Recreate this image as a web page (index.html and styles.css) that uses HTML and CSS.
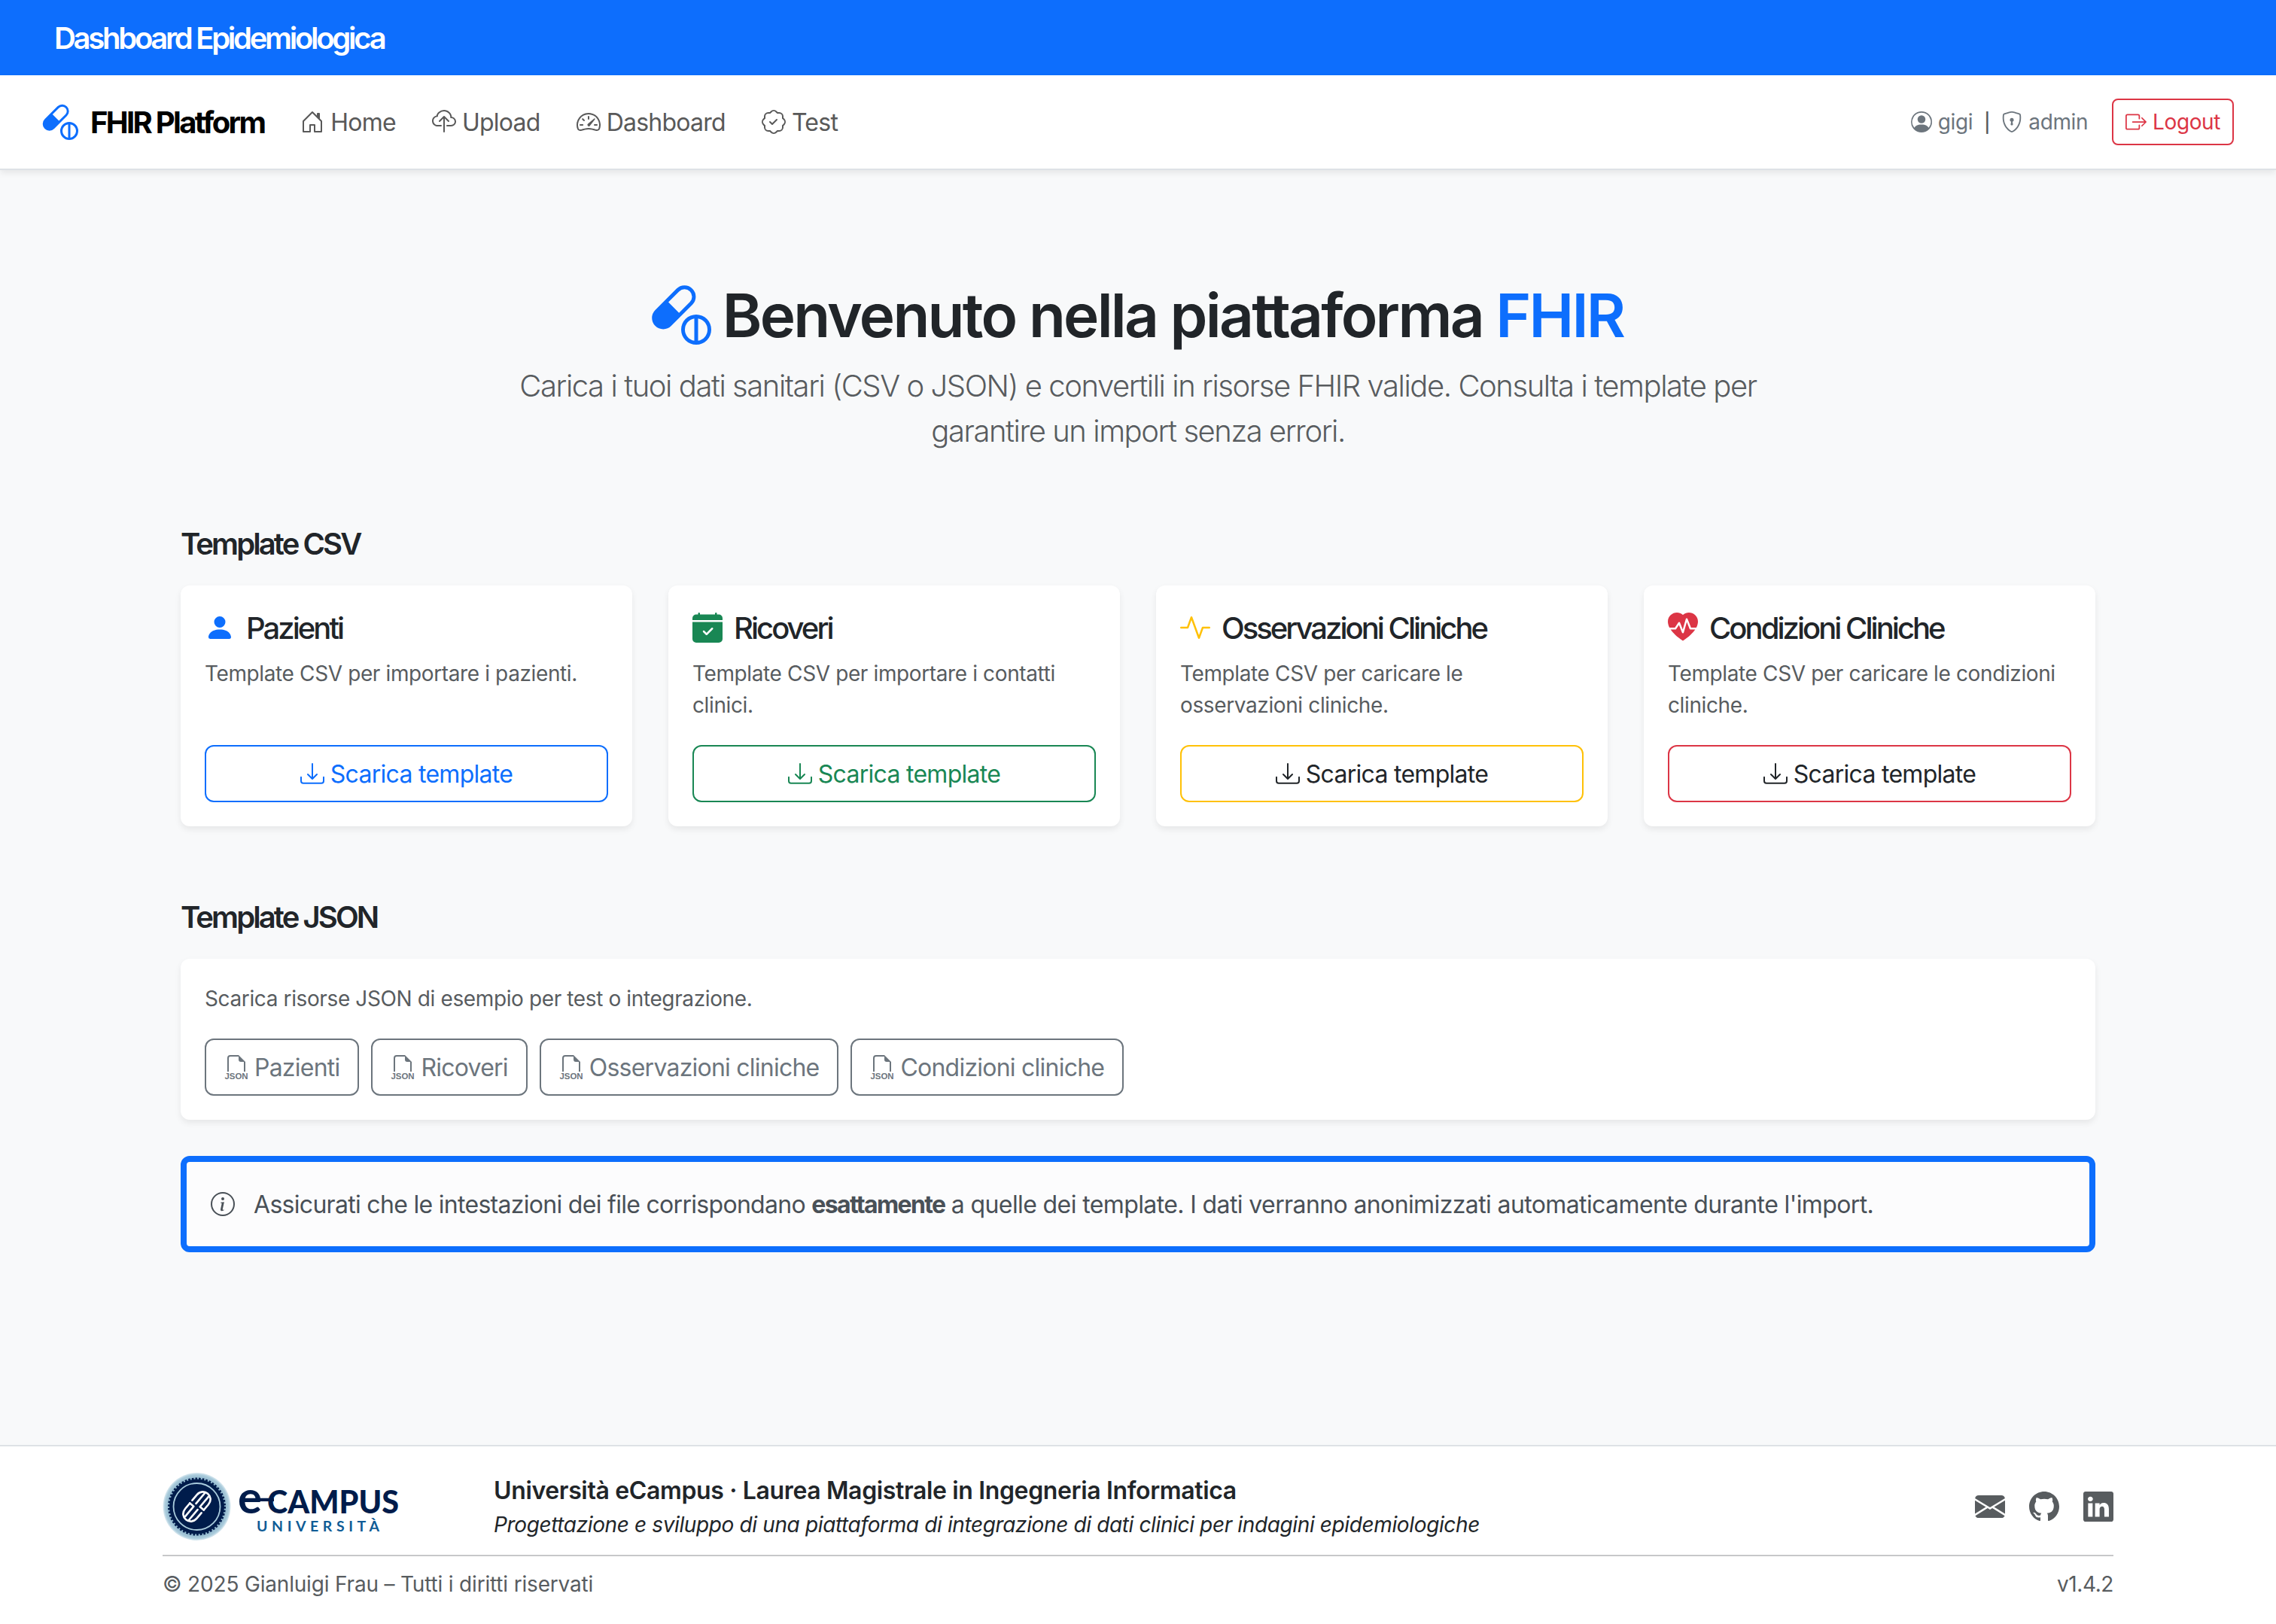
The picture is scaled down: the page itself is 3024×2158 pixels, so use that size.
FILE: index.html
```html
<!DOCTYPE html>
<html lang="it">
<head>
<meta charset="utf-8">
<title>FHIR Platform</title>
<link rel="stylesheet" href="styles.css">
</head>
<body>
<svg class="sprite" aria-hidden="true">
  <symbol id="capsule" viewBox="0 0 16 16"><path d="M11.02 5.364a3 3 0 0 0-4.242-4.243L1.121 6.778a3 3 0 1 0 4.243 4.243l5.657-5.657Zm-6.413-.657 2.878-2.879a2 2 0 1 1 2.829 2.829L7.435 7.536zM12 8a4 4 0 1 1 0 8 4 4 0 0 1 0-8m-.5 1.042a3 3 0 0 0 0 5.917zm1 5.917a3 3 0 0 0 0-5.917z"/></symbol>
  <symbol id="house" viewBox="0 0 16 16"><path d="M8.354 1.146a.5.5 0 0 0-.708 0l-6 6A.5.5 0 0 0 1.5 7.5v7a.5.5 0 0 0 .5.5h4.5a.5.5 0 0 0 .5-.5v-4h2v4a.5.5 0 0 0 .5.5H14a.5.5 0 0 0 .5-.5v-7a.5.5 0 0 0-.146-.354L13 5.793V2.5a.5.5 0 0 0-.5-.5h-1a.5.5 0 0 0-.5.5v1.293zM2.5 14V7.707l5.5-5.5 5.5 5.5V14H10v-4a.5.5 0 0 0-.5-.5h-3a.5.5 0 0 0-.5.5v4z"/></symbol>
  <symbol id="cloud" viewBox="0 0 16 16"><path d="M4.406 1.342A5.53 5.53 0 0 1 8 0c2.69 0 4.923 2 5.166 4.579C14.758 4.804 16 6.137 16 7.773 16 9.569 14.502 11 12.687 11H10a.5.5 0 0 1 0-1h2.688C13.979 10 15 8.988 15 7.773c0-1.216-1.02-2.228-2.313-2.228h-.5v-.5C12.188 2.825 10.328 1 8 1a4.53 4.53 0 0 0-2.941 1.1c-.757.652-1.153 1.438-1.153 2.055v.448l-.445.049C2.064 4.805 1 5.952 1 7.318 1 8.785 2.23 10 3.781 10H6a.5.5 0 0 1 0 1H3.781C1.708 11 0 9.366 0 7.318c0-1.763 1.266-3.223 2.942-3.593.143-.863.698-1.723 1.464-2.383"/><path d="M7.646 4.146a.5.5 0 0 1 .708 0l3 3a.5.5 0 0 1-.708.708L8.5 5.707V14.5a.5.5 0 0 1-1 0V5.707L5.354 7.854a.5.5 0 1 1-.708-.708z"/></symbol>
  <symbol id="speedometer" viewBox="0 0 16 16"><path d="M8 4a.5.5 0 0 1 .5.5V6a.5.5 0 0 1-1 0V4.5A.5.5 0 0 1 8 4M3.732 5.732a.5.5 0 0 1 .707 0l.915.914a.5.5 0 1 1-.708.708l-.914-.915a.5.5 0 0 1 0-.707M2 10a.5.5 0 0 1 .5-.5h1.586a.5.5 0 0 1 0 1H2.5A.5.5 0 0 1 2 10m9.5 0a.5.5 0 0 1 .5-.5h1.5a.5.5 0 0 1 0 1H12a.5.5 0 0 1-.5-.5m.754-4.246a.39.39 0 0 0-.527-.02L7.547 9.31a.91.91 0 1 0 1.302 1.258l3.434-4.297a.39.39 0 0 0-.029-.518z"/><path fill-rule="evenodd" d="M0 10a8 8 0 1 1 15.547 2.661c-.442 1.253-1.845 1.602-2.932 1.25C11.309 13.488 9.475 13 8 13c-1.474 0-3.31.488-4.615.911-1.087.352-2.49.003-2.932-1.25A8 8 0 0 1 0 10m8-7a7 7 0 0 0-6.603 9.329c.203.575.923.876 1.68.63C4.397 12.533 6.358 12 8 12s3.604.532 4.923.96c.757.245 1.477-.056 1.68-.631A7 7 0 0 0 8 3"/></symbol>
  <symbol id="patch" viewBox="0 0 16 16"><path fill-rule="evenodd" d="M10.354 6.146a.5.5 0 0 1 0 .708l-3 3a.5.5 0 0 1-.708 0l-1.5-1.5a.5.5 0 1 1 .708-.708L7 8.793l2.646-2.647a.5.5 0 0 1 .708 0"/><path d="m10.273 2.513-.921-.944.715-.698.622.637.89-.011a2.89 2.89 0 0 1 2.924 2.924l-.01.89.636.622a2.89 2.89 0 0 1 0 4.134l-.637.622.011.89a2.89 2.89 0 0 1-2.924 2.924l-.89-.01-.622.636a2.89 2.89 0 0 1-4.134 0l-.622-.637-.89.011a2.89 2.89 0 0 1-2.924-2.924l.01-.89-.636-.622a2.89 2.89 0 0 1 0-4.134l.637-.622-.011-.89a2.89 2.89 0 0 1 2.924-2.924l.89.01.622-.636a2.89 2.89 0 0 1 4.134 0l-.715.698a1.89 1.89 0 0 0-2.704 0l-.92.944-1.32-.016a1.89 1.89 0 0 0-1.911 1.912l.016 1.318-.944.921a1.89 1.89 0 0 0 0 2.704l.944.92-.016 1.32a1.89 1.89 0 0 0 1.912 1.911l1.318-.016.921.944a1.89 1.89 0 0 0 2.704 0l.92-.944 1.32.016a1.89 1.89 0 0 0 1.911-1.912l-.016-1.318.944-.921a1.89 1.89 0 0 0 0-2.704l-.944-.92.016-1.32a1.89 1.89 0 0 0-1.912-1.911z"/></symbol>
  <symbol id="person-circle" viewBox="0 0 16 16"><path d="M11 6a3 3 0 1 1-6 0 3 3 0 0 1 6 0"/><path fill-rule="evenodd" d="M0 8a8 8 0 1 1 16 0A8 8 0 0 1 0 8m8-7a7 7 0 0 0-5.468 11.37C3.242 11.226 4.805 10 8 10s4.757 1.225 5.468 2.37A7 7 0 0 0 8 1"/></symbol>
  <symbol id="shield" viewBox="0 0 16 16"><path d="M5.338 1.59a61 61 0 0 0-2.837.856.48.48 0 0 0-.328.39c-.554 4.157.726 7.19 2.253 9.188a10.7 10.7 0 0 0 2.287 2.233c.346.244.652.42.893.533q.18.085.293.118a1 1 0 0 0 .101.025 1 1 0 0 0 .1-.025q.114-.034.294-.118c.24-.113.547-.29.893-.533a10.7 10.7 0 0 0 2.287-2.233c1.527-1.997 2.807-5.031 2.253-9.188a.48.48 0 0 0-.328-.39c-.651-.213-1.75-.56-2.837-.855C9.552 1.29 8.531 1.067 8 1.067c-.53 0-1.552.223-2.662.524zM5.072.56C6.157.265 7.31 0 8 0s1.843.265 2.928.56c1.11.3 2.229.655 2.887.87a1.54 1.54 0 0 1 1.044 1.262c.596 4.477-.787 7.795-2.465 9.99a11.8 11.8 0 0 1-2.517 2.453 7 7 0 0 1-1.048.625c-.28.132-.581.24-.829.24s-.548-.108-.829-.24a7 7 0 0 1-1.048-.625 11.8 11.8 0 0 1-2.517-2.453C1.928 10.487.545 7.169 1.141 2.692A1.54 1.54 0 0 1 2.185 1.43 63 63 0 0 1 5.072.56"/><path d="M9.5 6.5a1.5 1.5 0 0 1-1 1.415l.385 1.99a.5.5 0 0 1-.491.595h-.788a.5.5 0 0 1-.49-.595l.384-1.99a1.5 1.5 0 1 1 2-1.415"/></symbol>
  <symbol id="exit" viewBox="0 0 16 16"><path fill-rule="evenodd" d="M10 12.5a.5.5 0 0 1-.5.5h-8a.5.5 0 0 1-.5-.5v-9a.5.5 0 0 1 .5-.5h8a.5.5 0 0 1 .5.5v2a.5.5 0 0 0 1 0v-2A1.5 1.5 0 0 0 9.5 2h-8A1.5 1.5 0 0 0 0 3.5v9A1.5 1.5 0 0 0 1.5 14h8a1.5 1.5 0 0 0 1.5-1.5v-2a.5.5 0 0 0-1 0z"/><path fill-rule="evenodd" d="M15.854 8.354a.5.5 0 0 0 0-.708l-3-3a.5.5 0 0 0-.708.708L14.293 7.5H5.5a.5.5 0 0 0 0 1h8.793l-2.147 2.146a.5.5 0 0 0 .708.708z"/></symbol>
  <symbol id="person" viewBox="0 0 16 16"><path d="M3 14s-1 0-1-1 1-4 6-4 6 3 6 4-1 1-1 1zm5-6a3 3 0 1 0 0-6 3 3 0 0 0 0 6"/></symbol>
  <symbol id="calendar" viewBox="0 0 16 16"><path d="M4 .5a.5.5 0 0 0-1 0V1H2a2 2 0 0 0-2 2v1h16V3a2 2 0 0 0-2-2h-1V.5a.5.5 0 0 0-1 0V1H4zM16 14V5H0v9a2 2 0 0 0 2 2h12a2 2 0 0 0 2-2m-5.146-5.146-3 3a.5.5 0 0 1-.708 0l-1.5-1.5a.5.5 0 0 1 .708-.708L7.5 10.793l2.646-2.647a.5.5 0 0 1 .708.708"/></symbol>
  <symbol id="activity" viewBox="0 0 16 16"><path fill-rule="evenodd" d="M6 2a.5.5 0 0 1 .47.33L10 12.036l1.53-4.208A.5.5 0 0 1 12 7.5h3.5a.5.5 0 0 1 0 1h-3.15l-1.88 5.17a.5.5 0 0 1-.94 0L6 3.964 4.47 8.171A.5.5 0 0 1 4 8.5H.5a.5.5 0 0 1 0-1h3.15l1.88-5.17A.5.5 0 0 1 6 2"/></symbol>
  <symbol id="heart" viewBox="0 0 16 16"><path d="M1.475 9C2.702 10.84 4.779 12.871 8 15c3.221-2.129 5.298-4.16 6.525-6H12a.5.5 0 0 1-.464-.314l-1.457-3.642-1.598 5.593a.5.5 0 0 1-.945.049L5.889 6.568l-1.473 2.21A.5.5 0 0 1 4 9z"/><path d="M.88 8C-2.427 1.68 4.41-2 7.823 1.143q.09.083.176.171a3 3 0 0 1 .176-.17C11.59-2 18.426 1.68 15.12 8h-2.783l-1.874-4.686a.5.5 0 0 0-.945.049L7.921 8.956 6.464 5.314a.5.5 0 0 0-.88-.091L3.732 8z"/></symbol>
  <symbol id="download" viewBox="0 0 16 16"><path d="M.5 9.9a.5.5 0 0 1 .5.5v2.5a1 1 0 0 0 1 1h12a1 1 0 0 0 1-1v-2.5a.5.5 0 0 1 1 0v2.5a2 2 0 0 1-2 2H2a2 2 0 0 1-2-2v-2.5a.5.5 0 0 1 .5-.5"/><path d="M7.646 11.854a.5.5 0 0 0 .708 0l3-3a.5.5 0 0 0-.708-.708L8.5 10.293V1.5a.5.5 0 0 0-1 0v8.793L5.354 8.146a.5.5 0 1 0-.708.708z"/></symbol>
  <symbol id="json" viewBox="0 0 16 16"><path d="M14 4.5V11h-1V4.5h-2A1.5 1.5 0 0 1 9.5 3V1H4a1 1 0 0 0-1 1v9H2V2a2 2 0 0 1 2-2h5.5z"/><text class="filetype" x="0.2" y="15.8" textLength="15.6" lengthAdjust="spacingAndGlyphs">JSON</text></symbol>
  <symbol id="info" viewBox="0 0 16 16"><path d="M8 15A7 7 0 1 1 8 1a7 7 0 0 1 0 14m0 1A8 8 0 1 0 8 0a8 8 0 0 0 0 16"/><path d="m8.93 6.588-2.29.287-.082.38.45.083c.294.07.352.176.288.469l-.738 3.468c-.194.897.105 1.319.808 1.319.545 0 1.178-.252 1.465-.598l.088-.416c-.2.176-.492.246-.686.246-.275 0-.375-.193-.304-.533zM9 4.5a1 1 0 1 1-2 0 1 1 0 0 1 2 0"/></symbol>
  <symbol id="envelope" viewBox="0 0 16 16"><path d="M.05 3.555A2 2 0 0 1 2 2h12a2 2 0 0 1 1.95 1.555L8 8.414zM0 4.697v7.104l5.803-3.558zM6.761 8.83l-6.57 4.027A2 2 0 0 0 2 14h12a2 2 0 0 0 1.808-1.144l-6.57-4.027L8 9.586zm3.436-.586L16 11.801V4.697z"/></symbol>
  <symbol id="github" viewBox="0 0 16 16"><path d="M8 0C3.58 0 0 3.58 0 8c0 3.54 2.29 6.53 5.47 7.59.4.07.55-.17.55-.38 0-.19-.01-.82-.01-1.49-2.01.37-2.53-.49-2.69-.94-.09-.23-.48-.94-.82-1.13-.28-.15-.68-.52-.01-.53.63-.01 1.08.58 1.23.82.72 1.21 1.87.87 2.33.66.07-.52.28-.87.51-1.07-1.78-.2-3.64-.89-3.64-3.95 0-.87.31-1.59.82-2.15-.08-.2-.36-1.02.08-2.12 0 0 .67-.21 2.2.82.64-.18 1.32-.27 2-.27s1.36.09 2 .27c1.53-1.04 2.2-.82 2.2-.82.44 1.1.16 1.92.08 2.12.51.56.82 1.27.82 2.15 0 3.07-1.87 3.75-3.65 3.95.29.25.54.73.54 1.48 0 1.07-.01 1.93-.01 2.2 0 .21.15.46.55.38A8.01 8.01 0 0 0 16 8c0-4.42-3.58-8-8-8"/></symbol>
  <symbol id="linkedin" viewBox="0 0 16 16"><path d="M0 1.146C0 .513.526 0 1.175 0h13.65C15.474 0 16 .513 16 1.146v13.708c0 .633-.526 1.146-1.175 1.146H1.175C.526 16 0 15.487 0 14.854zm4.943 12.248V6.169H2.542v7.225zm-1.2-8.212c.837 0 1.358-.554 1.358-1.248-.015-.709-.52-1.248-1.342-1.248S2.4 3.226 2.4 3.934c0 .694.521 1.248 1.327 1.248zm4.908 8.212V9.359c0-.216.016-.432.08-.586.173-.431.568-.878 1.232-.878.869 0 1.216.662 1.216 1.634v3.865h2.401V9.25c0-2.22-1.184-3.252-2.764-3.252-1.274 0-1.845.7-2.165 1.193v.025h-.016l.016-.025V6.169h-2.4c.03.678 0 7.225 0 7.225z"/></symbol>
</svg>

<div class="topbar"><span class="topbar-title">Dashboard Epidemiologica</span></div>

<nav class="navbar">
  <a class="brand"><svg class="icon brand-icon"><use href="#capsule"/></svg><span>FHIR Platform</span></a>
  <a class="nav-link"><svg class="icon"><use href="#house"/></svg><span>Home</span></a>
  <a class="nav-link"><svg class="icon"><use href="#cloud"/></svg><span>Upload</span></a>
  <a class="nav-link"><svg class="icon"><use href="#speedometer"/></svg><span>Dashboard</span></a>
  <a class="nav-link"><svg class="icon"><use href="#patch"/></svg><span>Test</span></a>
  <div class="account">
    <span class="account-item"><svg class="icon"><use href="#person-circle"/></svg><span>gigi</span></span>
    <span class="divider">|</span>
    <span class="account-item"><svg class="icon"><use href="#shield"/></svg><span>admin</span></span>
    <a class="logout"><svg class="icon"><use href="#exit"/></svg><span>Logout</span></a>
  </div>
</nav>

<main class="main">
  <header class="hero">
    <h1 class="hero-title"><svg class="icon hero-icon"><use href="#capsule"/></svg><span>Benvenuto nella piattaforma <span class="accent">FHIR</span></span></h1>
    <p class="lead">Carica i tuoi dati sanitari (CSV o JSON) e convertili in risorse FHIR valide. Consulta i template per<br>garantire un import senza errori.</p>
  </header>

  <section class="section">
    <h2 class="section-title">Template CSV</h2>
    <div class="cards">
      <article class="card">
        <h3 class="card-title"><svg class="icon blue"><use href="#person"/></svg><span>Pazienti</span></h3>
        <p class="card-text">Template CSV per importare i pazienti.</p>
        <a class="btn btn-blue"><svg class="icon"><use href="#download"/></svg><span>Scarica template</span></a>
      </article>
      <article class="card">
        <h3 class="card-title"><svg class="icon green"><use href="#calendar"/></svg><span>Ricoveri</span></h3>
        <p class="card-text">Template CSV per importare i contatti<br>clinici.</p>
        <a class="btn btn-green"><svg class="icon"><use href="#download"/></svg><span>Scarica template</span></a>
      </article>
      <article class="card">
        <h3 class="card-title"><svg class="icon yellow"><use href="#activity"/></svg><span>Osservazioni Cliniche</span></h3>
        <p class="card-text">Template CSV per caricare le<br>osservazioni cliniche.</p>
        <a class="btn btn-yellow"><svg class="icon"><use href="#download"/></svg><span>Scarica template</span></a>
      </article>
      <article class="card">
        <h3 class="card-title"><svg class="icon red"><use href="#heart"/></svg><span>Condizioni Cliniche</span></h3>
        <p class="card-text">Template CSV per caricare le condizioni<br>cliniche.</p>
        <a class="btn btn-red"><svg class="icon"><use href="#download"/></svg><span>Scarica template</span></a>
      </article>
    </div>
  </section>

  <section class="section">
    <h2 class="section-title">Template JSON</h2>
    <div class="card">
      <p class="card-text">Scarica risorse JSON di esempio per test o integrazione.</p>
      <div class="json-row">
        <a class="btn btn-gray"><svg class="icon"><use href="#json"/></svg><span>Pazienti</span></a>
        <a class="btn btn-gray"><svg class="icon"><use href="#json"/></svg><span>Ricoveri</span></a>
        <a class="btn btn-gray"><svg class="icon"><use href="#json"/></svg><span>Osservazioni cliniche</span></a>
        <a class="btn btn-gray"><svg class="icon"><use href="#json"/></svg><span>Condizioni cliniche</span></a>
      </div>
    </div>
  </section>

  <div class="notice"><svg class="icon"><use href="#info"/></svg><span><span class="notice-lead">Assicurati che le intestazioni dei file corrispondano </span><strong>esattamente</strong> a quelle dei template. I dati verranno anonimizzati automaticamente durante l'import.</span></div>
</main>

<footer class="footer">
  <div class="footer-inner">
    <div class="footer-top">
      <svg class="logo" viewBox="0 0 316 96">
        <defs><radialGradient id="rim"><stop offset=".82" stop-color="#8fb6cc"/><stop offset=".94" stop-color="#abccdc"/><stop offset="1" stop-color="#dcebf2"/></radialGradient></defs>
        <circle cx="45.5" cy="48" r="45" fill="url(#rim)"/>
        <circle cx="45.5" cy="48" r="36.5" fill="#001c4b"/>
        <circle cx="45.5" cy="48" r="37" fill="none" stroke="#001c4b" stroke-width="3" stroke-dasharray="2.6 2.05"/>
        <circle cx="45.5" cy="48" r="31" fill="none" stroke="#a9cbdc" stroke-width="1.8"/>
        <g transform="translate(45.5 48) rotate(-50)" fill="none" stroke="#fff" stroke-width="2.6" stroke-linecap="round">
          <path d="M-2.5-10H-12C-26-10-26 10-12 10H-2.5M2.5-10H12C26-10 26 10 12 10H2.5"/>
          <path d="M-2.5-3.4H-20M-2.5 3.4H-20M2.5-3.4H20M2.5 3.4H20M-2.5-10V-3.4M2.5 3.4V10"/>
        </g>
        <text class="logo-e" x="100" y="57" textLength="32" lengthAdjust="spacingAndGlyphs">e</text>
        <path d="M106 38.8h42" stroke="#001c4b" stroke-width="4.2"/>
        <text class="logo-name" x="139" y="56.6" textLength="175" lengthAdjust="spacingAndGlyphs">CAMPUS</text>
        <text class="logo-sub" x="125" y="80.5" textLength="163">UNIVERSITÀ</text>
      </svg>
      <div class="footer-text">
        <div class="footer-title">Università eCampus · Laurea Magistrale in Ingegneria Informatica</div>
        <div class="footer-subtitle">Progettazione e sviluppo di una piattaforma di integrazione di dati clinici per indagini epidemiologiche</div>
      </div>
      <div class="social">
        <svg class="icon"><use href="#envelope"/></svg>
        <svg class="icon"><use href="#github"/></svg>
        <svg class="icon"><use href="#linkedin"/></svg>
      </div>
    </div>
    <div class="footer-bottom"><span class="copyright">© 2025 Gianluigi Frau – Tutti i diritti riservati</span><span class="version">v1.4.2</span></div>
  </div>
</footer>
</body>
</html>
```
FILE: styles.css
```css
* { box-sizing: border-box; }

body {
  margin: 0;
  min-height: 2158px;
  display: flex;
  flex-direction: column;
  background: #f8f9fa;
  color: #212529;
  font-family: Inter, "Liberation Sans", sans-serif;
  font-size: 32px;
  line-height: 48px;
}

h1, h2, h3, p { margin: 0; }

span, a, p, h1, h2, h3, div { white-space: nowrap; }

.sprite { display: none; }

.icon {
  width: 32px;
  height: 32px;
  flex: none;
  fill: currentColor;
}

.filetype {
  font: 700 5.3px "Liberation Sans", sans-serif;
  letter-spacing: 0;
}

.topbar {
  height: 100px;
  display: flex;
  align-items: center;
  padding: 2px 72px 0;
  background: #0d6efd;
  color: #fff;
  font-size: 40px;
  font-weight: 600;
  letter-spacing: -3.28px;
}

.navbar {
  height: 126px;
  display: flex;
  align-items: center;
  gap: 48px;
  padding: 0 56px;
  background: #fff;
  border-bottom: 2px solid #dee2e6;
  box-shadow: 0 4px 8px rgba(0, 0, 0, .075);
  color: #595959;
}

.brand {
  display: flex;
  align-items: center;
  gap: 16px;
  color: #000;
  font-size: 40px;
  font-weight: 700;
  letter-spacing: -2.7px;
}

.brand-icon { width: 48px; height: 48px; color: #0d6efd; }

.brand span, .nav-link span { padding-top: 2px; }

.nav-link {
  display: flex;
  align-items: center;
  gap: 8px;
  letter-spacing: -.75px;
}

.account {
  display: flex;
  align-items: center;
  margin-left: auto;
  font-size: 28px;
  line-height: 42px;
  letter-spacing: -.4px;
}

.account .icon { width: 28px; height: 28px; }

.account-item {
  display: flex;
  align-items: center;
  gap: 8px;
  color: #6c757d;
}

.divider {
  margin: 0 15px;
  padding-top: 2px;
  font-size: 25px;
  font-weight: 500;
}

.logout {
  display: flex;
  align-items: center;
  gap: 8px;
  margin-left: 32px;
  padding: 8px 16px;
  border: 2px solid #dc3545;
  border-radius: 8px;
  color: #dc3545;
}

.main {
  flex: 1;
  width: 2544px;
  margin: 0 auto;
  padding-top: 144px;
}

.hero { text-align: center; margin-bottom: 95px; }

.hero-title {
  display: flex;
  justify-content: center;
  align-items: center;
  gap: 15px;
  height: 96px;
  padding-right: 2px;
  font-size: 80px;
  font-weight: 600;
  line-height: 96px;
  letter-spacing: -2.75px;
}

.hero-title > span { padding-top: 2px; }

.hero-icon { width: 80px; height: 80px; color: #0d6efd; }

.accent { color: #0d6efd; }

.lead {
  margin-top: 17px;
  color: #585c5f;
  font-size: 40px;
  font-weight: 300;
  line-height: 60px;
  letter-spacing: -1.44px;
}

.section { margin-bottom: 96px; }
.section + .notice { margin-top: -48px; }

.section-title {
  margin-bottom: 31px;
  padding-top: 1px;
  font-size: 40px;
  font-weight: 600;
  line-height: 48px;
  letter-spacing: -2.92px;
}

.cards {
  display: grid;
  grid-template-columns: repeat(4, 600px);
  gap: 48px;
}

.card {
  display: flex;
  flex-direction: column;
  padding: 32px;
  background: #fff;
  border-radius: 12px;
  box-shadow: 0 4px 8px rgba(0, 0, 0, .075);
}

.card-title {
  display: flex;
  align-items: center;
  gap: 15px;
  height: 48px;
  margin-bottom: 16px;
  font-size: 40px;
  font-weight: 500;
  line-height: 48px;
  letter-spacing: -2.97px;
}

.card-title span, .btn span, .notice > span { padding-top: 2px; }

.card-title .icon { width: 40px; height: 40px; }

.blue { color: #0d6efd; }
.green { color: #198754; }
.yellow { color: #ffc107; }
.red { color: #dc3545; }

.card-text {
  flex: 1;
  margin-bottom: 32px;
  color: #585c5f;
  font-size: 28px;
  line-height: 42px;
  letter-spacing: -.38px;
}

.btn {
  display: flex;
  justify-content: center;
  align-items: center;
  gap: 8px;
  height: 76px;
  padding: 0 24px;
  border: 2px solid;
  border-radius: 12px;
  letter-spacing: -.72px;
}

.btn-blue { color: #0d6efd; }
.btn-green { color: #198754; }
.btn-yellow { border-color: #ffc107; }
.btn-red { border-color: #dc3545; }
.btn-gray { color: #6c757d; letter-spacing: -.77px; }

.json-row { display: flex; gap: 16px; }

.notice {
  display: flex;
  align-items: center;
  gap: 25px;
  height: 128px;
  padding: 0 32px;
  background: #fcfcfd;
  border: 8px solid #0d6efd;
  border-radius: 12px;
  color: #495057;
  letter-spacing: -.61px;
}

.notice-lead { letter-spacing: -.7px; }

.notice strong { letter-spacing: -1.65px; }

.footer {
  height: 238px;
  padding-top: 32px;
  background: #fff;
  border-top: 2px solid #dee2e6;
}

.footer-inner { width: 2592px; margin: 0 auto; }

.footer-top {
  display: flex;
  align-items: center;
  height: 112px;
  padding-bottom: 16px;
}

.logo { width: 316px; height: 96px; }

.logo-e { font: 700 60px Lato, sans-serif; fill: #001c4b; }
.logo-name { font: 900 42px Lato, sans-serif; fill: #001c4b; }
.logo-sub { font: 700 19.5px Lato, sans-serif; fill: #0f5c96; }

.footer-text { margin-left: 124px; }

.footer-title {
  font-weight: 600;
  letter-spacing: -.36px;
}

.footer-subtitle {
  font-size: 28px;
  font-style: italic;
  line-height: 42px;
  letter-spacing: -.375px;
}

.social {
  display: flex;
  gap: 32px;
  margin-left: auto;
  color: #585c5f;
}

.social .icon { width: 40px; height: 40px; }

.footer-bottom {
  display: flex;
  justify-content: space-between;
  padding-top: 16px;
  border-top: 2px solid #c7c8c9;
  color: #585c5f;
  font-size: 28px;
  line-height: 42px;
  letter-spacing: -.18px;
}

.version { letter-spacing: -.4px; }
```
